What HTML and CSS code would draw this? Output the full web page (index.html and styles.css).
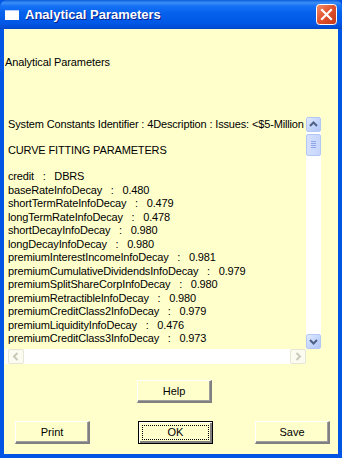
FILE: index.html
```html
<!DOCTYPE html>
<html lang="en">
<head>
    <meta charset="UTF-8">
    <title>Analytical Parameters</title>
    <link rel="stylesheet" href="styles.css">
</head>
<body>
    <div class="window">
        <div class="titlebar">
            <span class="app-icon"></span>
            <span class="title">Analytical Parameters</span>
            <span class="close-btn">
                <svg width="21" height="21" viewBox="0 0 21 21">
                    <defs>
                        <linearGradient id="closeFill" x1="0" y1="0" x2="1" y2="1">
                            <stop offset="0" stop-color="#f0906f"/>
                            <stop offset="0.5" stop-color="#e0502c"/>
                            <stop offset="1" stop-color="#c2391a"/>
                        </linearGradient>
                    </defs>
                    <rect x="0.5" y="0.5" width="20" height="20" rx="3" fill="url(#closeFill)" stroke="#fff"/>
                    <path d="M6 6 L15 15 M15 6 L6 15" stroke="#fff" stroke-width="2.2" stroke-linecap="square"/>
                </svg>
            </span>
        </div>
        <div class="client">
            <div class="caption">Analytical Parameters</div>

            <div class="listbox">
                <div class="list-text">
                    <div class="line">System Constants Identifier : 4Description : Issues: &lt;$5-Million</div>
                    <div class="line gap">CURVE FITTING PARAMETERS</div>
                    <div class="line gap">credit&nbsp;&nbsp; : &nbsp;&nbsp;DBRS</div>
                    <div class="line">baseRateInfoDecay&nbsp;&nbsp; : &nbsp;&nbsp;0.480</div>
                    <div class="line">shortTermRateInfoDecay&nbsp;&nbsp; : &nbsp;&nbsp;0.479</div>
                    <div class="line">longTermRateInfoDecay&nbsp;&nbsp; : &nbsp;&nbsp;0.478</div>
                    <div class="line">shortDecayInfoDecay&nbsp;&nbsp; : &nbsp;&nbsp;0.980</div>
                    <div class="line">longDecayInfoDecay&nbsp;&nbsp; : &nbsp;&nbsp;0.980</div>
                    <div class="line">premiumInterestIncomeInfoDecay&nbsp;&nbsp; : &nbsp;&nbsp;0.981</div>
                    <div class="line">premiumCumulativeDividendsInfoDecay&nbsp;&nbsp; : &nbsp;&nbsp;0.979</div>
                    <div class="line">premiumSplitShareCorpInfoDecay&nbsp;&nbsp; : &nbsp;&nbsp;0.980</div>
                    <div class="line">premiumRetractibleInfoDecay&nbsp;&nbsp; : &nbsp;&nbsp;0.980</div>
                    <div class="line">premiumCreditClass2InfoDecay&nbsp;&nbsp; : &nbsp;&nbsp;0.979</div>
                    <div class="line">premiumLiquidityInfoDecay&nbsp;&nbsp; : &nbsp;&nbsp;0.476</div>
                    <div class="line">premiumCreditClass3InfoDecay&nbsp;&nbsp; : &nbsp;&nbsp;0.973</div>
                </div>

                <!-- vertical scrollbar -->
                <div class="vscroll">
                    <span class="sb-btn">
                        <svg width="15" height="15" viewBox="0 0 15 15"><path d="M4 9 L7.5 5.5 L11 9" fill="none" stroke="#4d6185" stroke-width="2"/></svg>
                    </span>
                    <span class="sb-thumb">
                        <svg width="15" height="21" viewBox="0 0 15 21"><path d="M5 7.5 H10 M5 9.5 H10 M5 11.5 H10 M5 13.5 H10" stroke="#8ea6e8" stroke-width="1"/></svg>
                    </span>
                    <span class="sb-track"></span>
                    <span class="sb-btn">
                        <svg width="15" height="15" viewBox="0 0 15 15"><path d="M4 6 L7.5 9.5 L11 6" fill="none" stroke="#4d6185" stroke-width="2"/></svg>
                    </span>
                </div>

                <!-- horizontal scrollbar (disabled) -->
                <div class="hscroll">
                    <span class="sb-btn off">
                        <svg width="16" height="15" viewBox="0 0 16 15"><path d="M9.5 4 L6 7.5 L9.5 11" fill="none" stroke="#c9c9b8" stroke-width="2"/></svg>
                    </span>
                    <span class="sb-track"></span>
                    <span class="sb-btn off">
                        <svg width="16" height="15" viewBox="0 0 16 15"><path d="M6.5 4 L10 7.5 L6.5 11" fill="none" stroke="#c9c9b8" stroke-width="2"/></svg>
                    </span>
                </div>
                <div class="corner"></div>
            </div>

            <div class="help-row">
                <button class="btn">Help</button>
            </div>
            <div class="button-row">
                <button class="btn print">Print</button>
                <button class="btn ok"><span class="focus">OK</span></button>
                <button class="btn save">Save</button>
            </div>
        </div>
    </div>
</body>
</html>
```

FILE: styles.css
```css
body {
    margin: 0;
    padding: 0;
    font-family: "Liberation Sans", Arial, sans-serif;
}
.window {
    width: 342px;
    height: 458px;
    box-sizing: border-box;
    padding: 0 4px 4px 4px;
    background-color: #0055e5;
    display: flex;
    flex-direction: column;
}
.titlebar {
    height: 29px;
    margin: 0 -4px;
    padding: 0 5px 0 5px;
    display: flex;
    align-items: center;
    background: linear-gradient(to bottom, #0a5fdc 0%, #3d8ff7 10%, #1672f5 20%, #0561ec 45%, #0058e6 80%, #004fd8 92%, #0046c8 100%);
    border-radius: 7px 7px 0 0;
}
.app-icon {
    width: 14px;
    height: 10px;
    margin-top: 1px;
    background: #fff;
    border-top: 1px solid #b8d0ff;
    box-sizing: border-box;
}
.title {
    margin-left: 6px;
    color: #fff;
    font-weight: bold;
    font-size: 13px;
    text-shadow: 1px 1px 0 #0a1e8c;
    flex-grow: 1;
}
.close-btn {
    width: 21px;
    height: 21px;
    display: block;
}
.client {
    flex-grow: 1;
    background-color: #ffffcc;
    font-size: 11px;
    color: #000;
}
.caption {
    margin: 27px 0 0 1px;
    line-height: 13px;
    letter-spacing: -0.1px;
}
.listbox {
    margin: 48px 0 0 1px;
    width: 316px;
    height: 247px;
    display: grid;
    grid-template-columns: 301px 15px;
    grid-template-rows: 232px 15px;
}
.list-text {
    padding: 1px 0 0 3px;
    overflow: hidden;
    white-space: nowrap;
    letter-spacing: -0.15px;
}
.line {
    line-height: 13.5px;
}
.line.gap {
    margin-top: 12px;
}
.line.gap + .line.gap {
    margin-top: 13px;
}
.vscroll {
    display: flex;
    flex-direction: column;
    background: #fff;
}
.hscroll {
    display: flex;
    padding-left: 3px;
    background: #fff;
}
.hscroll .sb-track {
    flex-grow: 1;
}
.vscroll .sb-track {
    flex-grow: 1;
}
.corner {
    background: #ffffcc;
}
.sb-btn {
    width: 15px;
    height: 15px;
    box-sizing: border-box;
    display: block;
    border: 1px solid #b4c8f6;
    border-radius: 2px;
    background: linear-gradient(135deg, #e1eafe 0%, #c1d3fb 60%, #b4c8f6 100%);
    overflow: hidden;
}
.sb-btn svg {
    display: block;
    margin: -1px;
}
.sb-btn.off {
    width: 16px;
    border-color: #e6e6d4;
    background: #fbfbf2;
}
.sb-thumb {
    height: 22px;
    margin-top: 2px;
    box-sizing: border-box;
    display: block;
    border: 1px solid #b4c8f6;
    border-radius: 2px;
    background: linear-gradient(to right, #d4e0fd 0%, #c7d6fc 100%);
    overflow: hidden;
}
.sb-thumb svg {
    display: block;
    margin: -1px;
}
.help-row {
    margin-top: 16px;
    padding-left: 133px;
    display: flex;
}
.button-row {
    margin-top: 18px;
    padding-left: 11px;
    display: flex;
}
.btn {
    width: 75px;
    height: 23px;
    padding: 0;
    font-family: "Liberation Sans", Arial, sans-serif;
    font-size: 11px;
    color: #000;
    background-color: #ffffcc;
    border-style: solid;
    border-width: 1px 2px 2px 1px;
    border-color: #fff #808080 #808080 #fff;
    box-shadow: inset -1px -1px 0 #a0a0a0;
}
.ok {
    margin-left: 48px;
    border: 1px solid #000;
    box-shadow: inset 1px 1px 0 #fff, inset -2px -2px 0 #808080;
    padding: 3px;
}
.ok .focus {
    display: block;
    height: 100%;
    box-sizing: border-box;
    border: 1px dotted #000;
    line-height: 13px;
}
.save {
    margin-left: 42px;
}
```
